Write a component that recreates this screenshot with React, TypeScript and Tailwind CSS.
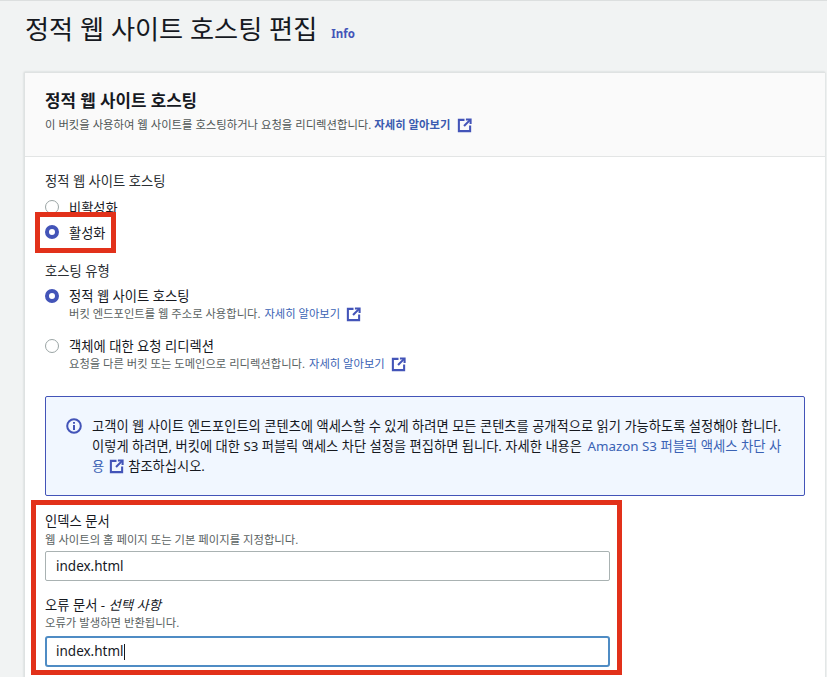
import React from "react";

function Ext({ className = "" }: { className?: string }) {
  return (
    <svg viewBox="0 0 16 16" className={"inline-block w-[15px] h-[15px] shrink-0 " + className} fill="none" stroke="#4354b8" strokeWidth="2.2">
      <path d="M8 2H2v12h12V8" />
      <path d="M9.5 1.5h5v5" />
      <path d="M14 2 7.5 8.5" />
    </svg>
  );
}

function Radio({ on }: { on?: boolean }) {
  return on ? (
    <span className="w-[14px] h-[14px] rounded-full border-[4px] border-[#4354b8] bg-white shrink-0" />
  ) : (
    <span className="w-[14px] h-[14px] rounded-full border border-[#9ba5a5] bg-white shrink-0" />
  );
}

export default function App() {
  return (
    <div className="relative w-[827px] h-[677px] overflow-hidden bg-[#f1f3f3] border-t border-[#dcdfdf] font-['Noto_Sans','Noto_Sans_CJK_KR',sans-serif] text-[#16191f]">
      <div className="flex items-end pl-[25px] h-[71px] pb-[25px]">
        <h1 className="text-[26.2px] leading-[36px] font-normal">정적 웹 사이트 호스팅 편집</h1>
        <span className="ml-[14px] mb-[5px] text-[11.5px] leading-[16px] font-bold text-[#4354b8]">Info</span>
      </div>

      <div className="ml-[24px] mr-[2px] h-[640px] bg-white border-l border-t border-[#dfe2e2] shadow-[0_0_2px_#c8cccc]">
        <div className="bg-[#fafafa] border-b border-[#e3e5e5] h-[84px] pl-[20px] pt-[17px]">
          <h2 className="text-[16.8px] leading-[22px] font-bold">정적 웹 사이트 호스팅</h2>
          <p className="flex items-center text-[11.35px] leading-[18px] text-[#4f5656] mt-[4px]">
            이 버킷을 사용하여 웹 사이트를 호스팅하거나 요청을 리디렉션합니다.
            <span className="ml-[3px] font-bold text-[#3a5bb0]">자세히 알아보기</span>
            <Ext className="ml-[7px]" />
          </p>
        </div>

        <div className="pl-[20px] pr-[20px] pt-[15px]">
          <div className="text-[13.3px] leading-[18px] text-[#2b2f33]">정적 웹 사이트 호스팅</div>
          <div className="flex items-start gap-[10px] h-[20px] mt-[8px] text-[13.2px] leading-[20px]">
            <span className="mt-[2px] flex"><Radio /></span>
            <span>비활성화</span>
          </div>
          <div className="flex items-start gap-[10px] h-[20px] mt-[5px] text-[13.2px] leading-[20px]">
            <span className="mt-[2px] flex"><Radio on /></span>
            <span>활성화</span>
          </div>

          <div className="text-[13.3px] leading-[18px] text-[#2b2f33] mt-[19px]">호스팅 유형</div>
          <div className="mt-[7px] flex gap-[10px]">
            <span className="mt-[2px] flex"><Radio on /></span>
            <div>
              <div className="text-[13.3px] leading-[18px]">정적 웹 사이트 호스팅</div>
              <div className="flex items-center text-[11.3px] leading-[16px] text-[#5a6262] mt-[1px]">
                버킷 엔드포인트를 웹 주소로 사용합니다.
                <span className="ml-[4px] text-[#3a62b4]">자세히 알아보기</span>
                <Ext className="ml-[6px]" />
              </div>
            </div>
          </div>
          <div className="mt-[15px] flex gap-[10px]">
            <span className="mt-[2px] flex"><Radio /></span>
            <div>
              <div className="text-[13.3px] leading-[18px]">객체에 대한 요청 리디렉션</div>
              <div className="flex items-center text-[11.3px] leading-[16px] text-[#5a6262] mt-[1px]">
                요청을 다른 버킷 또는 도메인으로 리디렉션합니다.
                <span className="ml-[4px] text-[#3a62b4]">자세히 알아보기</span>
                <Ext className="ml-[6px]" />
              </div>
            </div>
          </div>

          <div className="mt-[24px] h-[100px] border border-[#4354b8] rounded-[2px] bg-[#f1f7ff] flex pl-[20px] pt-[19px]">
            <svg viewBox="0 0 16 16" className="w-[16px] h-[16px] mt-[2px] shrink-0" fill="none" stroke="#4354b8" strokeWidth="2">
              <circle cx="8" cy="8" r="6.8" />
              <path d="M8 7v5" />
              <path d="M8 4v1.8" />
            </svg>
            <div className="ml-[10px] text-[13.25px] leading-[20px] w-[725px] text-[#16191f]">
              <div className="whitespace-nowrap">고객이 웹 사이트 엔드포인트의 콘텐츠에 액세스할 수 있게 하려면 모든 콘텐츠를 공개적으로 읽기 가능하도록 설정해야 합니다.</div>
              <div className="whitespace-nowrap">
                이렇게 하려면, 버킷에 대한 S3 퍼블릭 액세스 차단 설정을 편집하면 됩니다. 자세한 내용은{" "}
                <span className="ml-[2px] text-[13.35px] text-[#3a62b4]">Amazon S3 퍼블릭 액세스 차단 사</span>
              </div>
              <div className="flex items-center">
                <span className="text-[#3a62b4]">용</span>
                <Ext className="ml-[5px]" />
                <span className="ml-[4px]">참조하십시오.</span>
              </div>
            </div>
          </div>

          <div className="mt-[16px] w-[565px]">
            <div className="text-[13.3px] leading-[18px]">인덱스 문서</div>
            <div className="text-[11.35px] leading-[15px] mt-[2px] text-[#5a6262]">웹 사이트의 홈 페이지 또는 기본 페이지를 지정합니다.</div>
            <div className="mt-[4px] h-[30px] border border-[#a9b2b2] rounded-[2px] bg-white flex items-center pl-[10px] pt-[1px] text-[13.5px]">index.html</div>

            <div className="text-[13.3px] leading-[18px] mt-[15px]">
              오류 문서 - <i>선택 사항</i>
            </div>
            <div className="text-[11.35px] leading-[13px] mt-[2px] text-[#5a6262]">오류가 발생하면 반환됩니다.</div>
            <div className="mt-[7px] h-[31px] border-2 border-[#4f8cc4] rounded-[3px] bg-white flex items-center pl-[9px] text-[13.5px]">
              index.html
              <span className="w-px h-[16px] bg-[#16191f]" />
            </div>
          </div>
        </div>
      </div>

      <div className="absolute left-[35px] top-[211px] w-[81px] h-[41px] border-[5px] border-[#e2311a]" />
      <div className="absolute left-[31px] top-[499px] w-[591px] h-[175px] border-[5px] border-[#e2311a]" />
    </div>
  );
}
